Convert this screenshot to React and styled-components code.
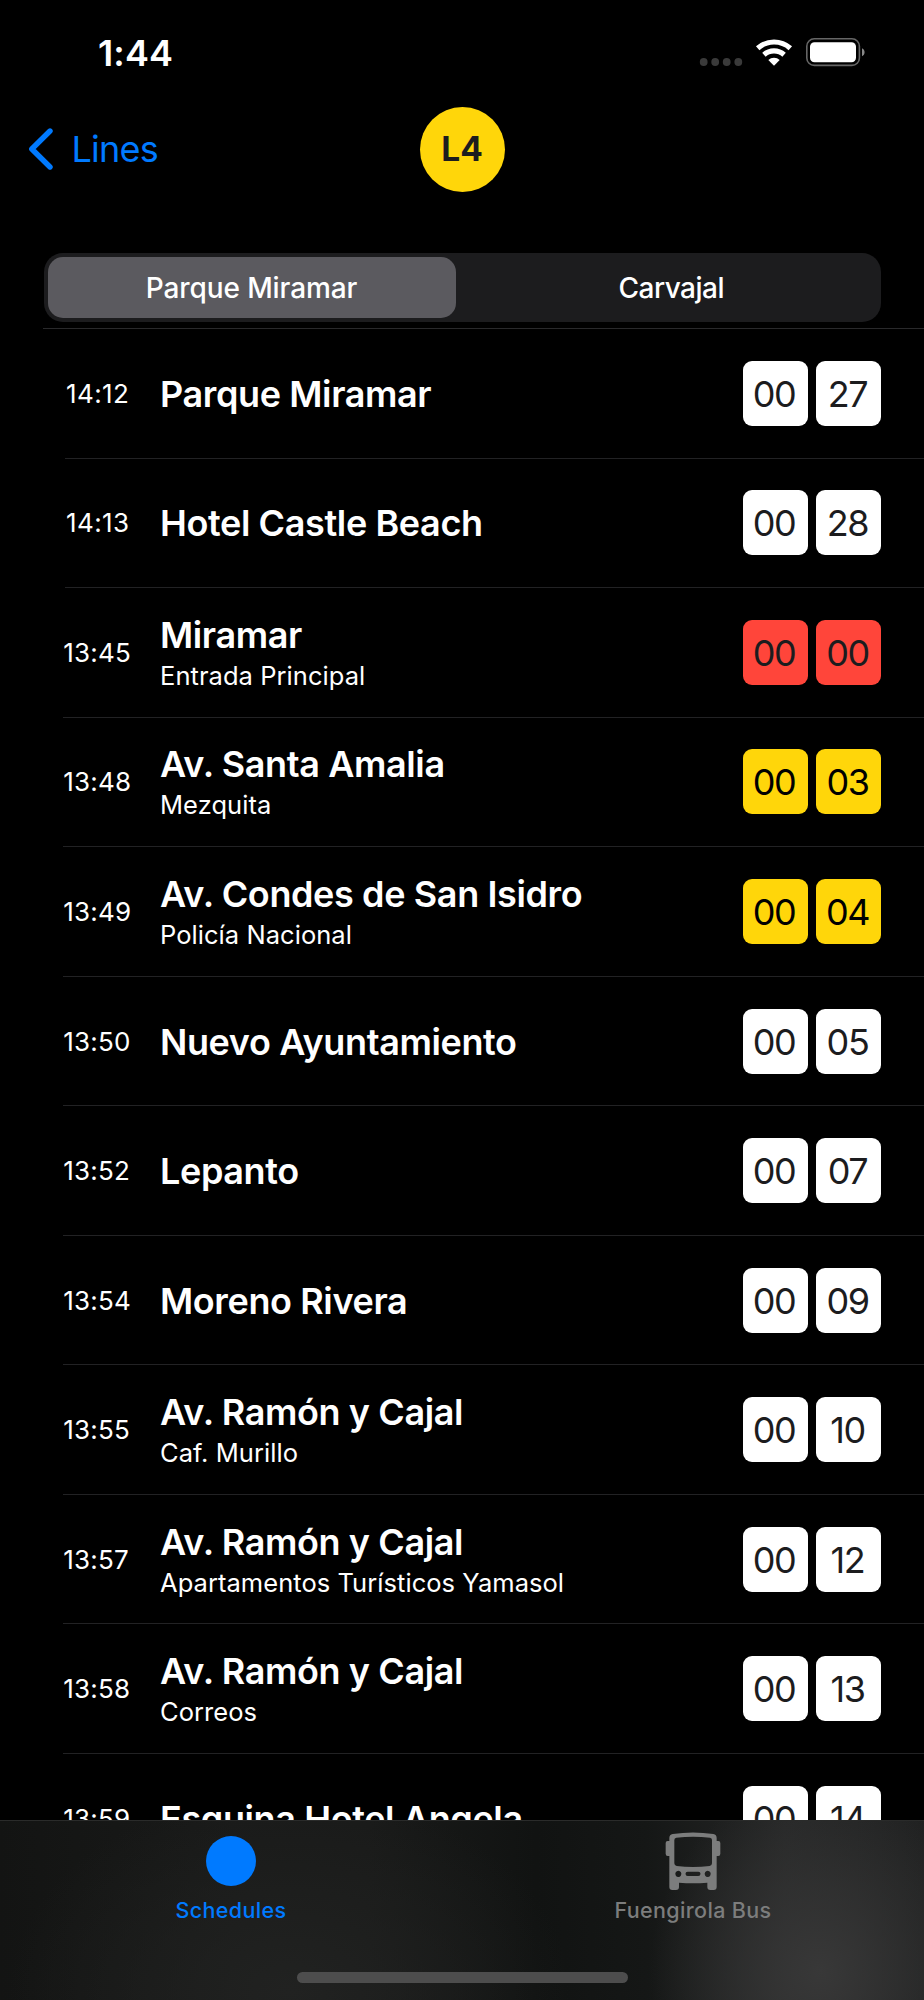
import React from "react";
import styled, { createGlobalStyle } from "styled-components";

const GlobalStyle = createGlobalStyle`
  * {
    box-sizing: border-box;
  }
  body {
    margin: 0;
    background: #000;
  }
`;

const Screen = styled.div`
  display: flex;
  flex-direction: column;
  width: 924px;
  height: 2000px;
  overflow: hidden;
  background: #000;
  color: #fff;
  font-family: Inter, "Liberation Sans", sans-serif;
`;

const StatusBar = styled.header`
  display: flex;
  justify-content: space-between;
  height: 106px;
  padding: 0 59px 0 98px;
`;

const Clock = styled.span`
  padding-top: 31px;
  font-size: 36px;
  line-height: 44px;
  font-weight: 600;
  letter-spacing: 0.1px;
`;

const StatusIcons = styled.svg`
  width: 168px;
  height: 32px;
  margin-top: 37px;
`;

const NavBar = styled.nav`
  display: grid;
  grid-template-columns: 1fr auto 1fr;
  align-items: center;
  height: 86px;
  padding: 0 28px;
`;

const BackButton = styled.a`
  display: flex;
  align-items: center;
  gap: 17.5px;
  color: #007aff;
  font-size: 36px;
  line-height: 44px;
  letter-spacing: -0.8px;
`;

const Chevron = styled.svg`
  width: 26px;
  height: 42px;
`;

const LineBadge = styled.div`
  display: flex;
  align-items: center;
  justify-content: center;
  width: 85px;
  height: 85px;
  border-radius: 50%;
  background: #ffd60a;
  color: #1c1c1e;
  font-size: 33.5px;
  font-weight: 700;
`;

const Segments = styled.div`
  display: flex;
  height: 69px;
  margin: 61px 43px 6px 43.5px;
  padding: 4px;
  border-radius: 19px;
  background: #1c1c1e;
`;

const Segment = styled.div`
  flex: ${({ $active }) => ($active ? "0 0 408px" : "1")};
  display: flex;
  align-items: center;
  justify-content: center;
  padding-left: ${({ $active }) => ($active ? 0 : "10px")};
  border-radius: 15px;
  background: ${({ $active }) => ($active ? "#5b5a5f" : "transparent")};
  font-size: 28px;
  font-weight: ${({ $active }) => ($active ? 500 : 450)};
  letter-spacing: ${({ $active }) => ($active ? "-0.1px" : "-0.5px")};
`;

const StopList = styled.ul`
  flex: 1;
  min-height: 0;
  margin: 0;
  padding: 0;
  overflow: hidden;
  list-style: none;

  &::before {
    content: "";
    display: block;
    height: 1px;
    margin-left: 43px;
    background: #29292b;
  }
`;

const StopRow = styled.li`
  display: flex;
  align-items: center;
  height: 129.55px;
  margin-left: ${({ $inset }) => $inset}px;
  padding-right: 43px;
  border-bottom: 1px solid #222224;
`;

const Time = styled.span`
  width: ${({ $inset }) => 160 - $inset}px;
  padding-left: ${({ $inset }) => ($inset > 63 ? 1 : 0.3)}px;
  font-size: 26px;
  letter-spacing: ${({ $inset }) => ($inset > 63 ? 0.4 : 0.2)}px;
`;

const Stop = styled.div`
  flex: 1;
  padding-top: 1px;
`;

const StopName = styled.div`
  font-size: 36px;
  line-height: 44px;
  font-weight: 600;
  letter-spacing: -0.38px;
  white-space: nowrap;
`;

const StopDetail = styled.div`
  margin-top: 2px;
  font-size: 25.5px;
  line-height: 34px;
  letter-spacing: 0.05px;
`;

const Countdown = styled.div`
  display: flex;
  gap: 8.5px;
`;

const tones = { late: "#ff453a", soon: "#ffd60a", normal: "#fff" };

const Digits = styled.span`
  display: flex;
  align-items: center;
  justify-content: center;
  width: 65px;
  height: 65px;
  padding: 1px 2px 0 0;
  border-radius: 9px;
  background: ${({ $tone }) => tones[$tone]};
  color: ${({ $tone }) => ($tone === "soon" ? "#000" : "#1c1c1e")};
  font-size: 36px;
  letter-spacing: -1.4px;
`;

const TabBar = styled.footer`
  height: 180px;
  border-top: 1px solid #2a2b2a;
  background:
    radial-gradient(ellipse 170px 190px at 820px 150px, #383838 0%, rgba(56, 56, 56, 0) 100%),
    radial-gradient(ellipse 280px 200px at 290px 170px, #212221 0%, rgba(33, 34, 33, 0) 100%),
    linear-gradient(90deg, #131413 0%, #191a19 25%, #191a19 40%, #111312 58%, #151716 70%, #262727 85%, #202121 100%);
`;

const Tabs = styled.div`
  display: grid;
  grid-template-columns: 1fr 1fr;
  height: 151px;
`;

const Tab = styled.a`
  display: flex;
  flex-direction: column;
  align-items: center;
  color: ${({ $active }) => ($active ? "#007aff" : "#7c7d7d")};
  font-size: 21.5px;
  line-height: 28px;
  font-weight: 500;
  letter-spacing: 0.35px;
`;

const TabIcon = styled.svg`
  width: 60px;
  height: 62px;
  margin: 10px 0 3px;
`;

const HomeIndicator = styled.div`
  width: 331px;
  height: 11px;
  margin: 0 auto;
  border-radius: 6px;
  background: #4d4d4d;
`;

const stops = [
  { time: "14:12", name: "Parque Miramar", left: "27" },
  { time: "14:13", name: "Hotel Castle Beach", left: "28" },
  { time: "13:45", name: "Miramar", detail: "Entrada Principal", left: "00", tone: "late" },
  { time: "13:48", name: "Av. Santa Amalia", detail: "Mezquita", left: "03", tone: "soon" },
  { time: "13:49", name: "Av. Condes de San Isidro", detail: "Policía Nacional", left: "04", tone: "soon" },
  { time: "13:50", name: "Nuevo Ayuntamiento", left: "05" },
  { time: "13:52", name: "Lepanto", left: "07" },
  { time: "13:54", name: "Moreno Rivera", left: "09" },
  { time: "13:55", name: "Av. Ramón y Cajal", detail: "Caf. Murillo", left: "10" },
  { time: "13:57", name: "Av. Ramón y Cajal", detail: "Apartamentos Turísticos Yamasol", left: "12" },
  { time: "13:58", name: "Av. Ramón y Cajal", detail: "Correos", left: "13" },
  { time: "13:59", name: "Esquina Hotel Angela", left: "14" },
];

const StopItem = ({ time, name, detail, left, tone = "normal" }) => {
  const inset = time.startsWith("14") ? 65 : 63;
  return (
    <StopRow $inset={inset}>
      <Time $inset={inset}>{time}</Time>
      <Stop>
        <StopName>{name}</StopName>
        {detail && <StopDetail>{detail}</StopDetail>}
      </Stop>
      <Countdown>
        <Digits $tone={tone}>00</Digits>
        <Digits $tone={tone}>{left}</Digits>
      </Countdown>
    </StopRow>
  );
};

const SignalIcons = () => (
  <StatusIcons viewBox="0 0 168 32">
    <g fill="#3a3a3a">
      <circle cx="6.7" cy="25" r="3.9" />
      <circle cx="18.2" cy="25" r="3.9" />
      <circle cx="29.7" cy="25" r="3.9" />
      <circle cx="41.3" cy="25" r="3.9" />
    </g>
    <g fill="none" stroke="#fff" strokeWidth="5.2">
      <path d="M60.7 11.2a24.5 24.5 0 0 1 32.6 0" />
      <path d="M66.9 17.8a15.2 15.2 0 0 1 20.2 0" />
    </g>
    <path d="M77 28.8L71.3 23a8.3 8.3 0 0 1 11.4 0z" fill="#fff" />
    <rect x="109.8" y="1.8" width="52.6" height="26.6" rx="7.5" fill="none" stroke="#666" strokeWidth="1.6" />
    <rect x="113" y="5.2" width="46" height="20" rx="4.5" fill="#fff" />
    <path d="M165 11.2v8c1.6-.7 2.6-2.2 2.6-4s-1-3.3-2.6-4z" fill="#888" />
  </StatusIcons>
);

const BusIcon = () => (
  <TabIcon viewBox="0 0 180 186" fill="currentColor">
    <path
      fillRule="evenodd"
      d="M19 21Q19 11 29 9Q90 0 151 9Q161 11 161 21V30H166Q172 30 172 36V68Q172 75 166 75H161V168Q161 177 152 177H142Q133 177 133 168V155Q90 158 48 155V168Q48 177 39 177H28Q19 177 19 168V75H14Q8 75 8 68V36Q8 30 14 30H19ZM40 20Q34 21 34 27V97Q34 104 41 105Q90 111 140 105Q147 104 147 97V27Q147 21 141 20Q90 15 40 20ZM46 119a9 9.5 0 1 0 .1 0ZM134 119a9 9.5 0 1 0 .1 0ZM74 122a6.5 6.5 0 0 0 0 13h32a6.5 6.5 0 0 0 0-13Z"
    />
  </TabIcon>
);

export default function App() {
  return (
    <>
      <GlobalStyle />
      <Screen>
        <StatusBar>
          <Clock>1:44</Clock>
          <SignalIcons />
        </StatusBar>
        <NavBar>
          <BackButton>
            <Chevron viewBox="0 0 26 42">
              <path d="M22 3L3.8 21L22 39" fill="none" stroke="currentColor" strokeWidth="5.4" strokeLinecap="round" strokeLinejoin="round" />
            </Chevron>
            Lines
          </BackButton>
          <LineBadge>L4</LineBadge>
        </NavBar>
        <Segments>
          <Segment $active>Parque Miramar</Segment>
          <Segment>Carvajal</Segment>
        </Segments>
        <StopList>
          {stops.map((stop) => (
            <StopItem key={stop.time} {...stop} />
          ))}
        </StopList>
        <TabBar>
          <Tabs>
            <Tab $active>
              <TabIcon viewBox="0 0 60 62">
                <circle cx="30" cy="30" r="25" fill="currentColor" />
              </TabIcon>
              Schedules
            </Tab>
            <Tab>
              <BusIcon />
              Fuengirola Bus
            </Tab>
          </Tabs>
          <HomeIndicator />
        </TabBar>
      </Screen>
    </>
  );
}
